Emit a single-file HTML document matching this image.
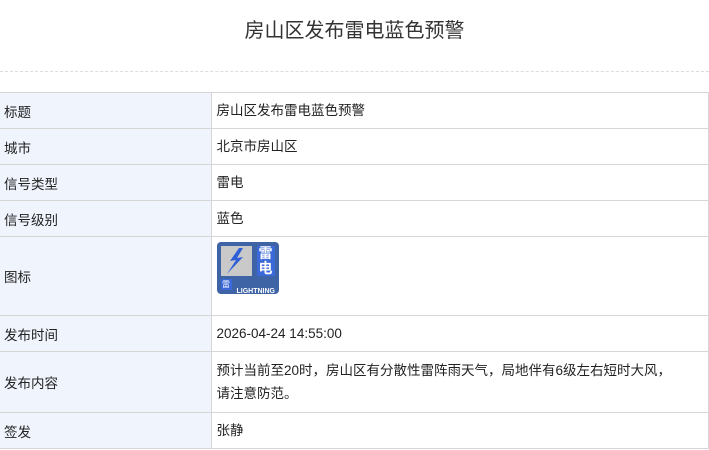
<!DOCTYPE html>
<html><head><meta charset="utf-8"><style>
*{margin:0;padding:0;box-sizing:border-box}
body{width:709px;height:450px;background:#fff;font-family:"Liberation Sans","Noto Sans CJK SC",sans-serif;color:#222;overflow:hidden;position:relative}
h1{position:absolute;top:14px;left:0;width:709px;text-align:center;font-size:20px;font-weight:normal;color:#333}
.dash{position:absolute;top:71px;left:0;width:709px;border-top:1px dashed #ddd}
table{position:absolute;top:92px;left:0;width:709px;border-collapse:collapse;font-size:13.5px}
td{border:1px solid #d6d6d6;padding:0 4px;vertical-align:middle}
td.l{width:211px;background:#f0f4fd;border-left:none}
td.r{padding-left:5px;padding-right:4px;line-height:23px;white-space:nowrap}
.ic{width:62px;height:52px;background:#3f64a6;border-radius:4px;position:relative;margin-top:-16px}
.g{position:absolute;left:4px;top:4px;width:31px;height:30px;background:#c9c9c9}
.c{position:absolute;left:40px;top:4px;width:18px;height:30px;background:#3b6ad8;color:#fff;font-size:14px;line-height:15px;text-align:center;font-weight:bold}
.bt{position:absolute;left:4px;top:37px;width:11px;height:11px;background:#3b6ad8;color:#fff;font-size:8px;line-height:11px;text-align:center}
.lt{position:absolute;left:20px;top:38px;color:#fff;font-size:7px;font-weight:bold}
</style></head><body>
<h1>房山区发布雷电蓝色预警</h1>
<div class="dash"></div>
<table>
<tr style="height:36px"><td class="l">标题</td><td class="r">房山区发布雷电蓝色预警</td></tr>
<tr style="height:36px"><td class="l">城市</td><td class="r">北京市房山区</td></tr>
<tr style="height:36px"><td class="l">信号类型</td><td class="r">雷电</td></tr>
<tr style="height:36px"><td class="l">信号级别</td><td class="r">蓝色</td></tr>
<tr style="height:79px"><td class="l">图标</td><td class="r"><div class="ic"><div class="g"><svg width="31" height="30" viewBox="0 0 31 30"><path d="M18 2 L9 15 L15 14 L6 28 L22 11 L16 12 L22 2 Z" fill="#2f5fd6"/></svg></div><div class="c">雷<br>电</div><div class="bt">雷</div><div class="lt">LIGHTNING</div></div></td></tr>
<tr style="height:36px"><td class="l">发布时间</td><td class="r">2026-04-24 14:55:00</td></tr>
<tr style="height:61px"><td class="l">发布内容</td><td class="r">预计当前至20时，房山区有分散性雷阵雨天气，局地伴有6级左右短时大风，<br>请注意防范。</td></tr>
<tr style="height:36px"><td class="l">签发</td><td class="r">张静</td></tr>
</table>
</body></html>
